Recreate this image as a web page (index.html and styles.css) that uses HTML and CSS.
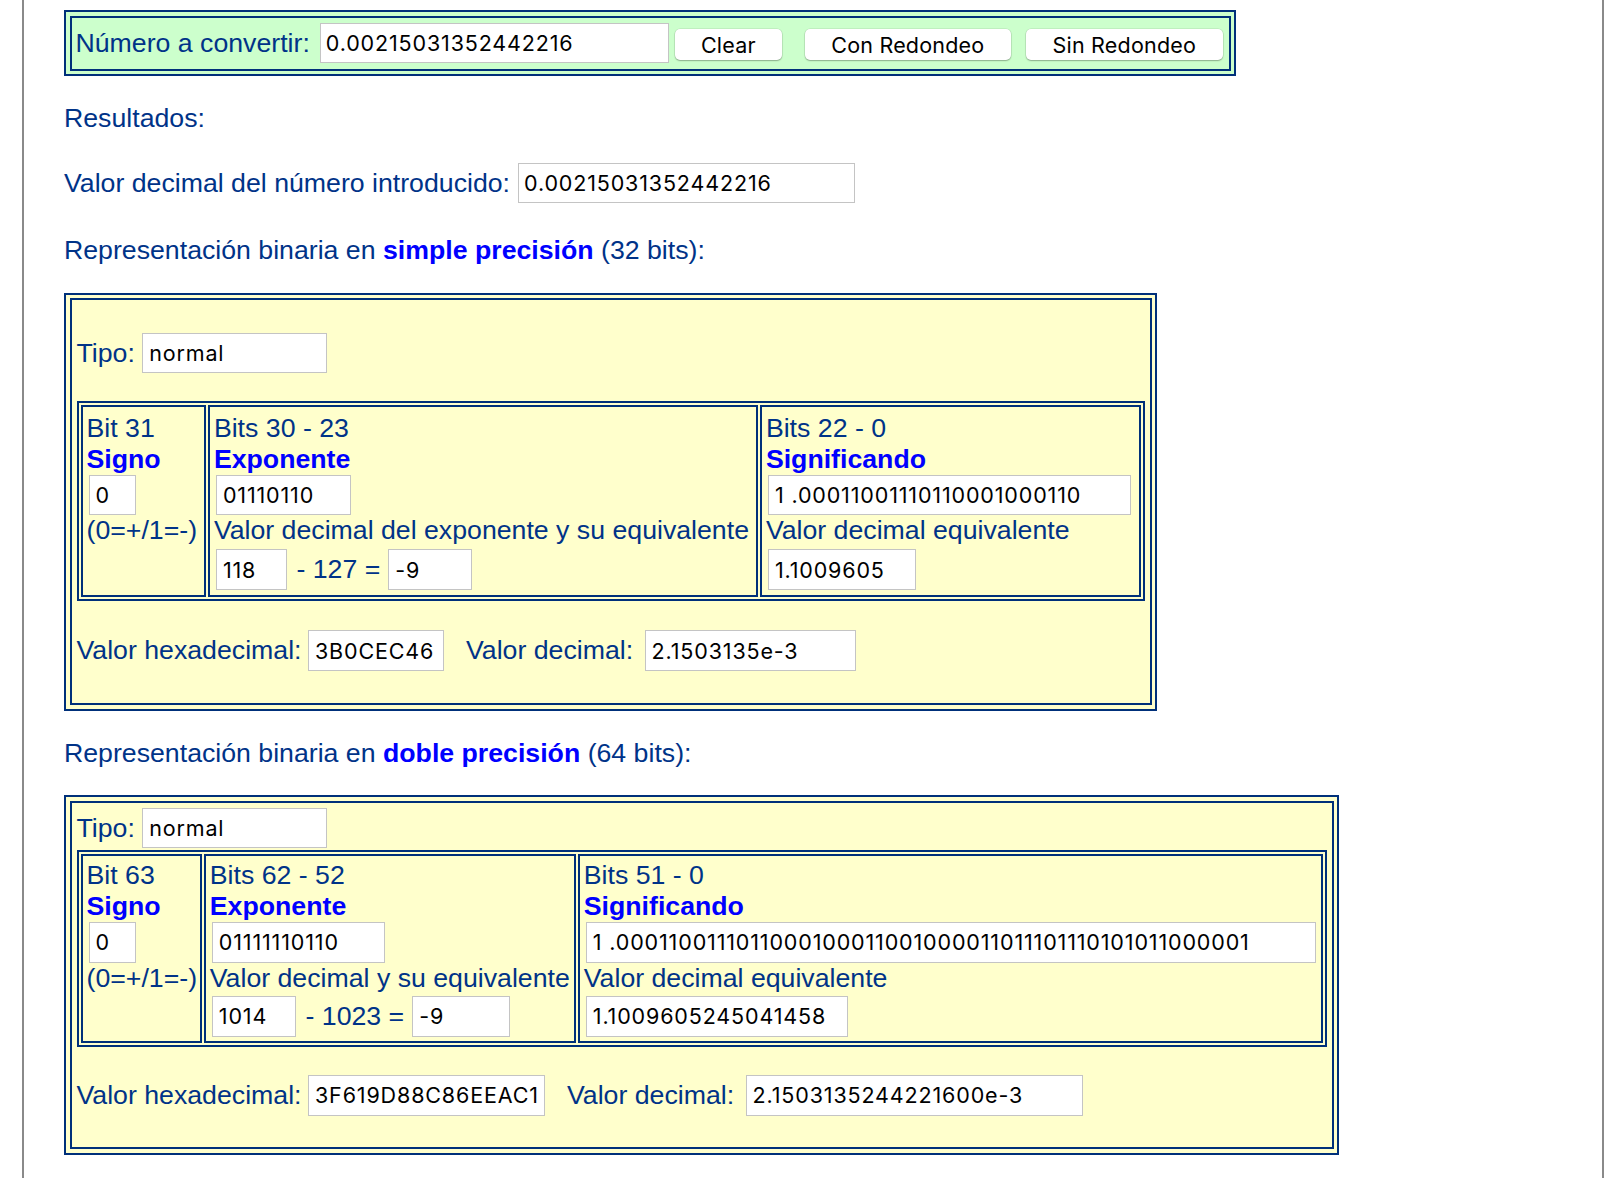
FILE: index.html
```html
<!DOCTYPE html>
<html lang="es">
<head>
<meta charset="utf-8">
<title>Conversor de coma flotante IEEE 754</title>
<link rel="stylesheet" href="styles.css">
</head>
<body>
<div class="page">
  <div class="box box-green">
    <div class="box-inner convert-row">
      <span class="label">Número a convertir:</span>
      <input class="field w-num" type="text" value="0.00215031352442216">
      <button class="btn btn-clear" type="button">Clear</button>
      <button class="btn btn-con" type="button">Con Redondeo</button>
      <button class="btn btn-sin" type="button">Sin Redondeo</button>
    </div>
  </div>

  <p class="results">Resultados:</p>

  <div class="dec-row">
    <span class="label">Valor decimal del número introducido:</span>
    <input class="field w-dec" type="text" value="0.00215031352442216">
  </div>

  <p class="heading heading-simple">Representación binaria en <b class="hl">simple precisión</b> (32 bits):</p>

  <div class="box box-yellow box-simple">
    <div class="box-inner inner-simple">
      <div class="tipo-row">
        <span class="label label-tipo">Tipo:</span>
        <input class="field w-tipo" type="text" value="normal">
      </div>
      <div class="bits bits-simple">
        <div class="cell">
          <div class="line">Bit 31</div>
          <div class="line hl">Signo</div>
          <input class="field cell-field w-sign" type="text" value="0">
          <div class="line">(0=+/1=-)</div>
        </div>
        <div class="cell">
          <div class="line">Bits 30 - 23</div>
          <div class="line hl">Exponente</div>
          <input class="field cell-field w-exp-s" type="text" value="01110110">
          <div class="line">Valor decimal del exponente y su equivalente</div>
          <div class="calc-row">
            <input class="field w-e-s" type="text" value="118">
            <span class="op">- 127 =</span>
            <input class="field w-r-s" type="text" value="-9">
          </div>
        </div>
        <div class="cell">
          <div class="line">Bits 22 - 0</div>
          <div class="line hl">Significando</div>
          <input class="field cell-field w-sig-s" type="text" value="1 .00011001110110001000110">
          <div class="line">Valor decimal equivalente</div>
          <div class="calc-row">
            <input class="field w-sd-s" type="text" value="1.1009605">
          </div>
        </div>
      </div>
      <div class="hex-row hex-simple">
        <span class="label label-hex">Valor hexadecimal:</span>
        <input class="field w-hex-s" type="text" value="3B0CEC46">
        <span class="label label-val">Valor decimal:</span>
        <input class="field w-val-s" type="text" value="2.1503135e-3">
      </div>
    </div>
  </div>

  <p class="heading heading-double">Representación binaria en <b class="hl">doble precisión</b> (64 bits):</p>

  <div class="box box-yellow box-double">
    <div class="box-inner inner-double">
      <div class="tipo-row">
        <span class="label label-tipo">Tipo:</span>
        <input class="field w-tipo" type="text" value="normal">
      </div>
      <div class="bits bits-double">
        <div class="cell">
          <div class="line">Bit 63</div>
          <div class="line hl">Signo</div>
          <input class="field cell-field w-sign" type="text" value="0">
          <div class="line">(0=+/1=-)</div>
        </div>
        <div class="cell">
          <div class="line">Bits 62 - 52</div>
          <div class="line hl">Exponente</div>
          <input class="field cell-field w-exp-d" type="text" value="01111110110">
          <div class="line">Valor decimal y su equivalente</div>
          <div class="calc-row">
            <input class="field w-e-d" type="text" value="1014">
            <span class="op">- 1023 =</span>
            <input class="field w-r-d" type="text" value="-9">
          </div>
        </div>
        <div class="cell">
          <div class="line">Bits 51 - 0</div>
          <div class="line hl">Significando</div>
          <input class="field cell-field w-sig-d" type="text" value="1 .0001100111011000100011001000011011101110101011000001">
          <div class="line">Valor decimal equivalente</div>
          <div class="calc-row">
            <input class="field w-sd-d" type="text" value="1.1009605245041458">
          </div>
        </div>
      </div>
      <div class="hex-row hex-double">
        <span class="label label-hex">Valor hexadecimal:</span>
        <input class="field w-hex-d" type="text" value="3F619D88C86EEAC1">
        <span class="label label-val">Valor decimal:</span>
        <input class="field w-val-d" type="text" value="2.1503135244221600e-3">
      </div>
    </div>
  </div>
</div>
</body>
</html>
```

FILE: styles.css
```css
* {
  box-sizing: border-box;
}

html,
body {
  margin: 0;
  padding: 0;
  background: #ffffff;
}

body {
  font-family: "Liberation Sans", Arial, Helvetica, sans-serif;
  font-size: 26.7px;
  line-height: 31px;
  color: #003388;
}

.page {
  margin-left: 22px;
  width: 1582px;
  min-height: 100vh;
  border-left: 2px solid #8a8a8a;
  border-right: 2px solid #8a8a8a;
  padding: 10px 0 1px 40px;
}

/* double-ruled boxes */
.box {
  border: 2px solid #00307a;
  padding: 3.5px;
}

.box-inner {
  border: 2px solid #00307a;
}

.box-green {
  width: 1172px;
  background: #ccffcc;
}

.box-yellow {
  background: #ffffcc;
}

.box-simple {
  width: 1093px;
  margin-top: 26.3px;
}

.box-double {
  width: 1275px;
  margin-top: 26px;
}

.label {
  white-space: nowrap;
}

.hl {
  color: #0000ff;
  font-weight: bold;
}

/* text fields */
.field {
  display: block;
  flex: none;
  margin: 0;
  height: 40.5px;
  padding: 0 6px;
  border: 1px solid #c4c4c4;
  border-radius: 0;
  background: #ffffff;
  color: #000000;
  font-family: Inter, "Liberation Sans", sans-serif;
  font-size: 21.5px;
  letter-spacing: 0.85px;
  outline: none;
}

/* top converter bar */
.convert-row {
  display: flex;
  align-items: center;
  height: 55px;
  padding: 0 4px;
}

.convert-row .field {
  margin-left: 10px;
  padding-left: 5px;
}

.btn {
  flex: none;
  align-self: flex-start;
  margin-top: 11.5px;
  height: 31px;
  padding: 0;
  border: none;
  border-radius: 5px;
  background: #ffffff;
  box-shadow: 0 0 0 0.5px rgba(0, 0, 0, 0.12), 0 1px 1.5px rgba(0, 0, 0, 0.28);
  color: #000000;
  font-family: Inter, "Liberation Sans", sans-serif;
  font-size: 21.5px;
  letter-spacing: 0.2px;
}

.btn-clear {
  width: 107px;
  margin-left: 6px;
}

.btn-con {
  width: 206px;
  margin-left: 23px;
}

.btn-sin {
  width: 197px;
  margin-left: 15px;
}

.results {
  margin: 26.8px 0 0;
}

.dec-row {
  display: flex;
  align-items: center;
  margin-top: 29.2px;
}

.dec-row .field {
  margin-left: 8px;
  padding-left: 5px;
}

.heading {
  margin: 32px 0 0;
}

.heading-double {
  margin-top: 27.8px;
}

/* yellow result boxes */
.inner-simple {
  padding: 32.5px 4.5px 32.2px 5px;
}

.inner-double {
  padding: 5px 4.5px 31.5px 5px;
}

.tipo-row {
  display: flex;
  align-items: center;
}

.label-tipo {
  margin-right: 7.3px;
}

.bits {
  display: grid;
  column-gap: 2px;
  padding: 2px;
  border: 2px solid #00307a;
}

.bits-simple {
  grid-template-columns: 125.4px 550px 1fr;
  margin-top: 27.9px;
}

.bits-double {
  grid-template-columns: 121.3px 372px 1fr;
  margin-top: 1.6px;
}

.cell {
  border: 2px solid #00307a;
  padding: 4px;
  min-width: 0;
}

.bits-simple .cell {
  padding: 5.5px 4px 5px;
}

.line {
  white-space: nowrap;
}

.cell-field {
  margin: 0 0 0 2px;
}

.calc-row {
  display: flex;
  align-items: center;
  margin: 2.6px 0 0 2px;
}

.bits-simple .calc-row {
  margin-top: 3.2px;
}

.op {
  margin: 0 8px 0 9px;
  white-space: nowrap;
}

.hex-row {
  display: flex;
  align-items: center;
}

.hex-simple {
  margin-top: 29.6px;
}

.hex-double {
  margin-top: 28.4px;
}

.label-hex {
  margin-right: 6.5px;
}

.label-val {
  margin-left: 22px;
  margin-right: 11.5px;
}

/* field widths (size attribute equivalents) */
.w-num { width: 349px; }
.w-dec { width: 337px; }
.w-tipo { width: 185px; }
.w-sign { width: 47px; }
.w-exp-s { width: 135.5px; }
.w-e-s { width: 71.5px; }
.w-r-s { width: 84px; }
.w-sig-s { width: 363.5px; }
.w-sd-s { width: 148px; }
.w-hex-s { width: 136px; }
.w-val-s { width: 211px; }
.w-exp-d { width: 173.7px; }
.w-e-d { width: 84.7px; }
.w-r-d { width: 97.4px; }
.w-sig-d { width: 730px; }
.w-sd-d { width: 262px; }
.w-hex-d { width: 237px; }
.w-val-d { width: 337.7px; }
```
